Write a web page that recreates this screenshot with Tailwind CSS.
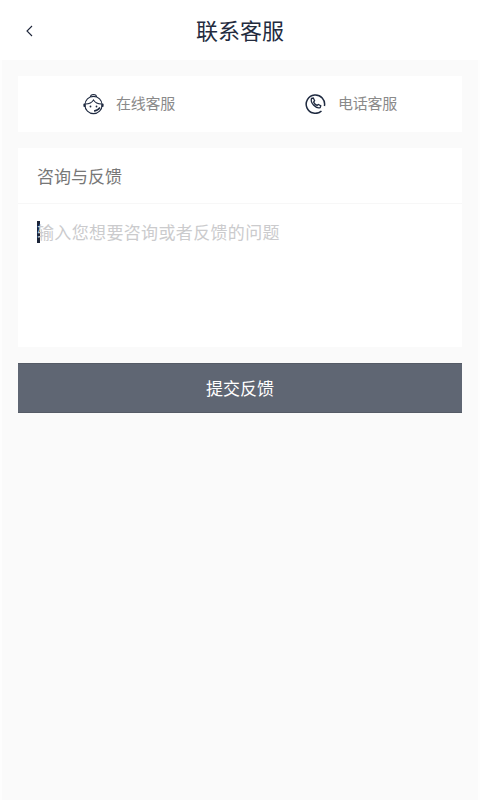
<!DOCTYPE html>
<html>
<head>
<meta charset="utf-8" />
<script src="https://cdn.jsdelivr.net/npm/@tailwindcss/browser@4"></script>
<title>联系客服</title>
</head>
<body class="bg-[#fafafa]">
<div class="w-[480px] h-[800px] overflow-hidden flex flex-col bg-[#fafafa] font-['Noto_Sans_CJK_SC','Liberation_Sans',sans-serif]">
  <!-- header -->
  <div class="h-[60px] shrink-0 bg-white flex items-center relative justify-center pb-[2px]">
    <svg class="absolute left-[25px] top-[25px] w-[9px] h-[12px]" viewBox="0 0 9 12" fill="none" stroke="#1c2438" stroke-width="1.1"><path d="M7 1 L2 6 L7 11" /></svg>
    <h1 class="text-[22px] leading-[30px] text-[#232b3e]">联系客服</h1>
  </div>

  <div class="flex-1 flex flex-col px-[16px] pt-[16px] border-x-2 border-[#fdfdfd]">
    <!-- contact options -->
    <div class="h-[56px] bg-white flex items-center pb-[2px]">
      <div class="flex-1 flex items-center justify-center gap-[12px]">
        <svg class="w-[21px] h-[23px]" viewBox="0 0 21 23" fill="none" stroke="#1f2a40" stroke-width="1.1">
          <circle cx="10.5" cy="13" r="8.6" />
          <path d="M7.5 5 C7.5 1.6 13.5 1.6 13.5 5" />
          <path d="M2.5 12 C6 12 9 10.5 10.5 8 C12 10.5 15 12 18.5 12" />
          <path d="M11 19 C13.5 19 15.5 17.5 17 15.5" stroke-width="1.4" />
          <circle cx="7.5" cy="14.5" r="0.9" fill="#1f2a40" stroke="none" />
          <circle cx="13.5" cy="14.5" r="0.9" fill="#1f2a40" stroke="none" />
          <rect x="0.4" y="11.5" width="2.2" height="3.4" rx="1" fill="#1f2a40" stroke="none" />
          <rect x="18.4" y="11.5" width="2.2" height="3.4" rx="1" fill="#1f2a40" stroke="none" />
        </svg>
        <span class="text-[15px] leading-[20px] text-[#8a8a8a] -tracking-[0.2px]">在线客服</span>
      </div>
      <div class="flex-1 flex items-center justify-center gap-[12px]">
        <svg class="w-[21px] h-[21px]" viewBox="0 0 21 21" fill="none" stroke="#1f2a40" stroke-width="1.5">
          <path d="M16.5 18 A9.2 9.2 0 1 1 19.4 13" />
          <path d="M6.5 5.5 L8.3 5 L9.6 7.6 L8.6 9 C9.2 10.6 10.4 11.8 12 12.4 L13.4 11.4 L15.8 12.8 L15.2 14.6 C11 16 5 10 6.5 5.5 Z" stroke-width="1.3" />
        </svg>
        <span class="text-[15px] leading-[20px] text-[#8a8a8a] -tracking-[0.2px]">电话客服</span>
      </div>
    </div>

    <!-- feedback -->
    <div class="mt-[16px] bg-white h-[199px] flex flex-col">
      <div class="h-[56px] shrink-0 flex items-center pl-[19px] border-b border-[#f7f7f7] text-[17px] text-[#777777]">咨询与反馈</div>
      <div class="flex items-start pl-[19px] pt-[17px]">
        <span class="w-[3px] h-[22px] bg-[#1c2438] -mr-[3px] shrink-0"></span>
        <span class="text-[17px] leading-[22px] tracking-[0.35px] text-[#cbcbcd]">输入您想要咨询或者反馈的问题</span>
      </div>
    </div>

    <!-- submit -->
    <button class="mt-[16px] h-[50px] w-full bg-[#5f6673] border-y border-[#555b66] text-white text-[17px]">提交反馈</button>
  </div>
</div>
</body>
</html>
